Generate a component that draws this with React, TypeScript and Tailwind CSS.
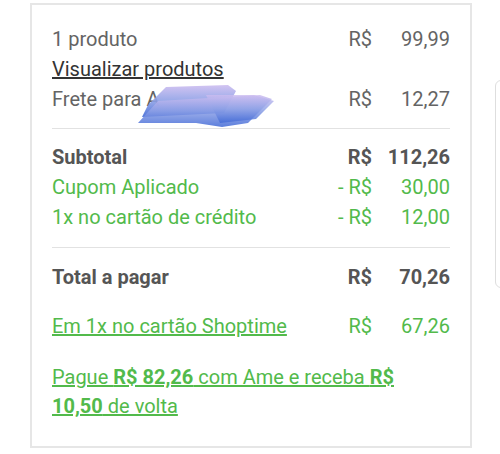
const GREEN = "text-[#52ba4b]";

type Row = {
  label: React.ReactNode;
  cur?: string;
  value?: string;
  tone?: "gray" | "bold" | "green";
};

function PriceRow({ label, cur, value, tone = "gray" }: Row) {
  const color =
    tone === "green" ? GREEN : tone === "bold" ? "text-[#555] font-bold" : "text-[#646464]";
  return (
    <div className={`flex items-center leading-[30px] ${color}`}>
      <div className="flex-1 min-w-0 whitespace-nowrap">{label}</div>
      {cur && <div className="text-right whitespace-nowrap">{cur}</div>}
      {value && <div className="w-[78px] text-right">{value}</div>}
    </div>
  );
}

/** 住所部分を塗りつぶした青いなぐり書き */
function Scribble() {
  return (
    <svg
      className="absolute left-[136px] top-[83px] pointer-events-none"
      width="140"
      height="46"
      viewBox="0 0 140 46"
    >
      <defs>
        <linearGradient id="sc" x1="0" y1="0" x2="0" y2="1">
          <stop offset="0" stopColor="#cdbdf0" />
          <stop offset="0.5" stopColor="#8da0e6" />
          <stop offset="1" stopColor="#3f68d6" />
        </linearGradient>
      </defs>
      <polygon points="12,22 30,4 92,2 100,8 88,30 6,34" fill="url(#sc)" opacity="0.9" />
      <polygon points="2,40 22,18 124,12 136,16 112,40 86,44 60,40" fill="url(#sc)" opacity="0.85" />
      <polygon points="70,12 118,12 138,18 120,36 84,40" fill="url(#sc)" opacity="0.8" />
    </svg>
  );
}

export default function App() {
  return (
    <div
      className="relative w-[500px] h-[454px] bg-white overflow-hidden text-[20px]"
      style={{ fontFamily: "Roboto, 'Noto Sans', sans-serif" }}
    >
      <div className="ml-[30px] mt-[3px] w-[442px] h-[445px] border-2 border-[#e6e6e6] px-[20px] pt-[19px]">
        <div className="relative">
          <PriceRow label="1 produto" cur="R$" value="99,99" />
          <PriceRow label={<span className="underline text-[#333]">Visualizar produtos</span>} />
          <PriceRow label="Frete para A" cur="R$" value="12,27" />
        </div>

        <div className="mt-[14px] h-px bg-[#e2e2e2]" />

        <div className="mt-[13px]">
          <PriceRow label="Subtotal" cur="R$" value="112,26" tone="bold" />
          <PriceRow label="Cupom Aplicado" cur="- R$" value="30,00" tone="green" />
          <PriceRow label="1x no cartão de crédito" cur="- R$" value="12,00" tone="green" />
        </div>

        <div className="mt-[15px] h-px bg-[#e2e2e2]" />

        <div className="mt-[14px]">
          <PriceRow label="Total a pagar" cur="R$" value="70,26" tone="bold" />
        </div>

        <div className="mt-[19px]">
          <PriceRow
            label={<span className="underline">Em 1x no cartão Shoptime</span>}
            cur="R$"
            value="67,26"
            tone="green"
          />
        </div>

        <p className={`mt-[22px] max-w-[365px] leading-[29px] underline ${GREEN}`}>
          Pague <b>R$ 82,26</b> com Ame e receba <b>R$ 10,50</b> de volta
        </p>
      </div>

      <Scribble />

      <div className="absolute left-[495px] top-[80px] w-[12px] h-[208px] rounded-l-[6px] border border-[#dedede]" />
    </div>
  );
}
